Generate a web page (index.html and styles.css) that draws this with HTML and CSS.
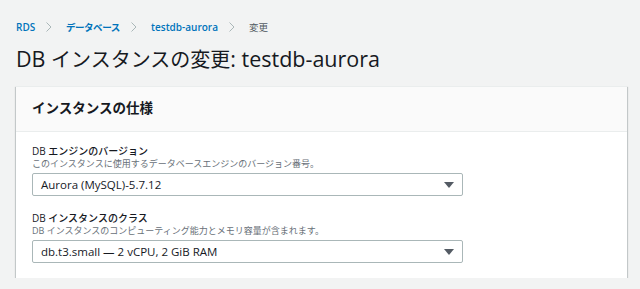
FILE: index.html
```html
<!DOCTYPE html>
<html lang="ja">
<head>
    <meta charset="UTF-8">
    <meta name="viewport" content="width=device-width, initial-scale=1.0">
    <title>DB インスタンスの変更</title>
    <link rel="stylesheet" href="styles.css">
</head>
<body>
    <div class="page">
        <nav class="breadcrumbs">
            <a href="#">RDS</a>
            <svg class="chevron" width="6" height="10" viewBox="0 0 6 10"><polyline points="0.5,0.5 5,5 0.5,9.5" /></svg>
            <a href="#" class="ja">データベース</a>
            <svg class="chevron" width="6" height="10" viewBox="0 0 6 10"><polyline points="0.5,0.5 5,5 0.5,9.5" /></svg>
            <a href="#">testdb-aurora</a>
            <svg class="chevron" width="6" height="10" viewBox="0 0 6 10"><polyline points="0.5,0.5 5,5 0.5,9.5" /></svg>
            <span class="current ja">変更</span>
        </nav>

        <h1>DB <span class="ja">インスタンスの変更</span>: testdb-aurora</h1>

        <div class="container">
            <div class="container-header">
                <h2>インスタンスの仕様</h2>
            </div>
            <div class="container-body">
                <div class="field">
                    <label for="engineVersion">DB エンジンのバージョン</label>
                    <div class="description">このインスタンスに使用するデータベースエンジンのバージョン番号。</div>
                    <div class="select" id="engineVersion">
                        <span>Aurora (MySQL)-5.7.12</span>
                        <span class="caret"></span>
                    </div>
                </div>
                <div class="field">
                    <label for="instanceClass">DB インスタンスのクラス</label>
                    <div class="description">DB インスタンスのコンピューティング能力とメモリ容量が含まれます。</div>
                    <div class="select" id="instanceClass">
                        <span>db.t3.small — 2 vCPU, 2 GiB RAM</span>
                        <span class="caret"></span>
                    </div>
                </div>
            </div>
        </div>
    </div>
</body>
</html>
```

FILE: styles.css
```css
body {
    font-family: "Open Sans", "Noto Sans CJK JP", sans-serif;
    background-color: #f2f3f3;
    color: #16191f;
    margin: 0;
    padding: 0;
}
.page {
    padding: 19px 13px 0 16px;
}
.breadcrumbs {
    display: flex;
    align-items: center;
    height: 16px;
    font-size: 10px;
}
.breadcrumbs a {
    color: #0073bb;
    font-weight: 600;
    text-decoration: none;
}
.breadcrumbs .ja {
    font-size: 9.5px;
    font-feature-settings: "palt";
}
.breadcrumbs .current {
    color: #545b64;
}
.chevron {
    margin: 0 14px 0 11px;
    fill: none;
    stroke: #aab7b8;
    stroke-width: 1;
}
h1 {
    margin: 9px 0 11px;
    font-size: 21.5px;
    font-weight: 400;
    line-height: 30px;
}
h1 .ja {
    font-size: 20px;
}
.container {
    background-color: white;
    border-top: 1px solid #eaeded;
    box-shadow: 0 1px 1px 0 rgba(0, 28, 36, 0.3), 1px 1px 1px 0 rgba(0, 28, 36, 0.15), -1px 1px 1px 0 rgba(0, 28, 36, 0.15);
}
.container-header {
    background-color: #fafafa;
    border-bottom: 1px solid #eaeded;
    padding: 11px 16px 12px;
}
.container-header h2 {
    margin: 0;
    font-size: 13.5px;
    font-weight: 700;
    line-height: 21px;
}
.container-body {
    padding: 12px 16px 15px;
}
.field + .field {
    margin-top: 15px;
}
.field label {
    display: block;
    font-size: 10px;
    font-weight: 500;
    line-height: 14px;
}
.description {
    font-size: 9px;
    line-height: 12px;
    color: #687078;
}
.select {
    display: flex;
    align-items: center;
    justify-content: space-between;
    box-sizing: border-box;
    width: 431px;
    height: 23px;
    margin-top: 3px;
    padding: 0 8px;
    border: 1px solid #aab7b8;
    border-radius: 2px;
    font-size: 11.5px;
}
.caret {
    width: 0;
    height: 0;
    border-left: 5.5px solid transparent;
    border-right: 5.5px solid transparent;
    border-top: 6px solid #545b64;
}
```
